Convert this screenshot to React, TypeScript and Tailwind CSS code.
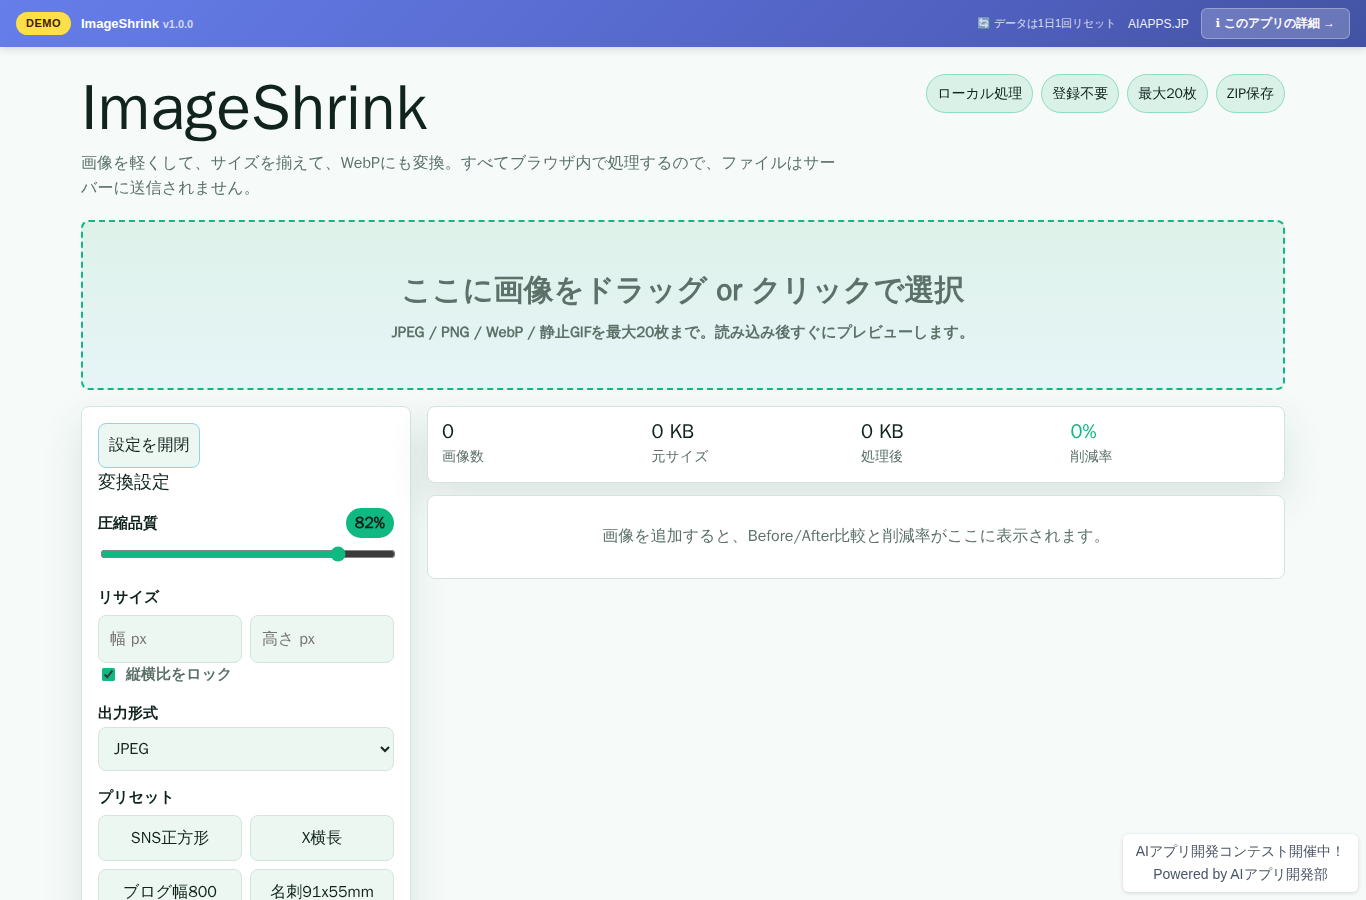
import React, { useState } from "react";

const BADGES = ["ローカル処理", "登録不要", "最大20枚", "ZIP保存"];

const STATS = [
  { label: "画像数", value: "0" },
  { label: "元サイズ", value: "0 KB" },
  { label: "処理後", value: "0 KB" },
  { label: "削減率", value: "0%", accent: true },
];

const PRESETS = [
  { label: "SNS正方形", width: "1080", height: "1080" },
  { label: "X横長", width: "1600", height: "900" },
  { label: "ブログ幅800", width: "800", height: "" },
  { label: "名刺91x55mm", width: "1075", height: "650" },
];

const fieldClass =
  "w-full min-w-0 rounded-lg border border-[#d3e6de] bg-[#edf7f2] text-base text-[#10241d]";

function DemoBar() {
  return (
    <header className="sticky top-0 z-50 flex flex-wrap items-center justify-between gap-3 bg-linear-135 from-[#667eea] via-[#5060c0] via-70% to-[#4353a3] px-4 py-2 font-['Liberation_Sans',sans-serif] text-white shadow-[0_2px_8px_rgba(0,0,0,0.15)]">
      <div className="flex items-center gap-2.5">
        <span className="rounded-full bg-[#fddf47] px-2.5 py-1 text-[11px] leading-[15px] font-bold tracking-[0.5px] text-[#422006]">
          DEMO
        </span>
        <span className="text-[13px] font-bold">
          ImageShrink <span className="text-[11px] opacity-70">v1.0.0</span>
        </span>
      </div>
      <div className="flex items-center gap-3">
        <span className="text-[11px] opacity-80">🔄 データは1日1回リセット</span>
        <a href="#top" className="text-xs opacity-90">
          AIAPPS.JP
        </a>
        <a
          href="#detail"
          className="rounded-md border border-white/30 bg-white/20 px-3.5 py-1.5 text-xs leading-[17px] font-bold"
        >
          <span className="font-['DejaVu_Sans',sans-serif]">ℹ</span> このアプリの詳細 →
        </a>
      </div>
    </header>
  );
}

function DropZone() {
  return (
    <label className="mt-[19px] flex cursor-pointer flex-col items-center justify-center gap-1.5 rounded-lg border-2 border-dashed border-[#10b981] bg-linear-to-b from-[#def2e9] to-[#e6f4f7] px-6 py-11 text-center font-black text-[#5c7269]">
      <input type="file" accept="image/*" multiple className="sr-only" />
      <span className="text-[30px] leading-[48px]">ここに画像をドラッグ or クリックで選択</span>
      <span className="text-[15px] leading-6">
        JPEG / PNG / WebP / 静止GIFを最大20枚まで。読み込み後すぐにプレビューします。
      </span>
    </label>
  );
}

function SettingsPanel() {
  const [quality, setQuality] = useState(82);
  const [width, setWidth] = useState("");
  const [height, setHeight] = useState("");
  const [locked, setLocked] = useState(true);
  const [open, setOpen] = useState(true);

  return (
    <aside className="rounded-lg border border-[#d3e6de] bg-white p-4 shadow-[0_16px_40px_rgba(16,60,40,0.12)]">
      <button
        type="button"
        onClick={() => setOpen(!open)}
        className="block rounded-lg border border-[#8fd3ee] bg-[#edf7f2] px-2.5 py-[9px] text-base leading-[25px]"
      >
        設定を開閉
      </button>
      <h2 className="text-lg leading-7">変換設定</h2>

      {open && (
        <>
          <div className="mt-3 flex items-center justify-between">
            <label htmlFor="quality" className="text-[15px] leading-6 font-black">
              圧縮品質
            </label>
            <output
              htmlFor="quality"
              className="rounded-full bg-[#10b981] px-[9px] py-[3px] text-base leading-6 font-black"
            >
              {quality}%
            </output>
          </div>
          <input
            id="quality"
            type="range"
            min={0}
            max={100}
            value={quality}
            onChange={(e) => setQuality(Number(e.target.value))}
            className="m-0.5 mt-2 block h-4 w-full accent-[#10b981]"
          />

          <fieldset className="mt-[23px]">
            <legend className="pb-1.5 text-[15px] leading-6 font-black">リサイズ</legend>
            <div className="grid grid-cols-2 gap-2">
              <input
                type="text"
                inputMode="numeric"
                aria-label="幅"
                placeholder="幅 px"
                value={width}
                onChange={(e) => setWidth(e.target.value)}
                className={`${fieldClass} h-12 px-[11px] placeholder:text-[#757575]`}
              />
              <input
                type="text"
                inputMode="numeric"
                aria-label="高さ"
                placeholder="高さ px"
                value={height}
                onChange={(e) => setHeight(e.target.value)}
                className={`${fieldClass} h-12 px-[11px] placeholder:text-[#757575]`}
              />
            </div>
            <label className="flex items-center gap-2 text-[15px] leading-[22px] font-black text-[#5c7269]">
              <input
                type="checkbox"
                checked={locked}
                onChange={(e) => setLocked(e.target.checked)}
                className="mr-[3px] ml-1 size-[13px] accent-[#10b981]"
              />
              縦横比をロック
            </label>
          </fieldset>

          <label htmlFor="format" className="mt-4 block pb-0.5 text-[15px] leading-6 font-black">
            出力形式
          </label>
          <select id="format" className={`${fieldClass} block h-11 px-[11px]`}>
            <option>JPEG</option>
            <option>PNG</option>
            <option>WebP</option>
          </select>

          <h3 className="mt-3.5 pb-1.5 text-[15px] leading-6 font-black">プリセット</h3>
          <div className="grid grid-cols-2 gap-2">
            {PRESETS.map((p) => (
              <button
                key={p.label}
                type="button"
                onClick={() => {
                  setWidth(p.width);
                  setHeight(p.height);
                }}
                className={`${fieldClass} h-[46px] px-2`}
              >
                {p.label}
              </button>
            ))}
          </div>
        </>
      )}
    </aside>
  );
}

export default function App() {
  return (
    <div
      id="top"
      lang="ja"
      className="min-h-screen bg-[#f6fbf9] font-['WenQuanYi_Zen_Hei','Noto_Sans_CJK_JP',sans-serif] text-[#10241d]"
    >
      <DemoBar />

      <main className="mx-auto max-w-[1240px] px-[18px] pt-[27px] pb-10">
        <div className="flex flex-wrap items-start justify-between gap-4">
          <div className="max-w-[760px]">
            <h1 className="text-[64px] leading-[67px]">ImageShrink</h1>
            <p className="mt-2.5 text-base leading-[25px] text-[#5c7269]">
              画像を軽くして、サイズを揃えて、WebPにも変換。すべてブラウザ内で処理するので、ファイルはサーバーに送信されません。
            </p>
          </div>
          <ul className="flex flex-wrap gap-2">
            {BADGES.map((badge) => (
              <li
                key={badge}
                className="rounded-full border border-[#8fdcc0] bg-[#daf1e8] px-2.5 py-1.5 text-[14px] leading-[25px]"
              >
                {badge}
              </li>
            ))}
          </ul>
        </div>

        <DropZone />

        <div className="mt-4 grid items-start gap-4 lg:grid-cols-[330px_minmax(0,1fr)]">
          <SettingsPanel />

          <section className="grid gap-3">
            <dl className="grid grid-cols-2 gap-2.5 rounded-lg border border-[#d3e6de] bg-white px-3.5 pt-3 pb-3.5 shadow-[0_16px_40px_rgba(16,60,40,0.12)] sm:grid-cols-4">
              {STATS.map((stat) => (
                <div key={stat.label} className="flex flex-col-reverse justify-end">
                  <dt className="text-[14px] leading-[23px] text-[#5c7269]">{stat.label}</dt>
                  <dd className={`text-xl leading-[26px] ${stat.accent ? "text-[#10b981]" : ""}`}>
                    {stat.value}
                  </dd>
                </div>
              ))}
            </dl>
            <p className="rounded-lg border border-[#d3e6de] bg-white px-7 pt-7 pb-[30px] text-center text-base leading-6 text-[#5c7269]">
              画像を追加すると、Before/After比較と削減率がここに表示されます。
            </p>
          </section>
        </div>
      </main>

      <div className="fixed right-2 bottom-2 z-50 rounded-md bg-white px-[13px] py-1.5 text-center font-['Liberation_Sans',sans-serif] text-sm leading-[23px] text-[#4a5568] shadow-[0_1px_4px_rgba(0,0,0,0.15)]">
        <a href="#contest" className="block">
          AIアプリ開発コンテスト開催中！
        </a>
        <a href="#powered" className="block">
          Powered by AIアプリ開発部
        </a>
      </div>
    </div>
  );
}
